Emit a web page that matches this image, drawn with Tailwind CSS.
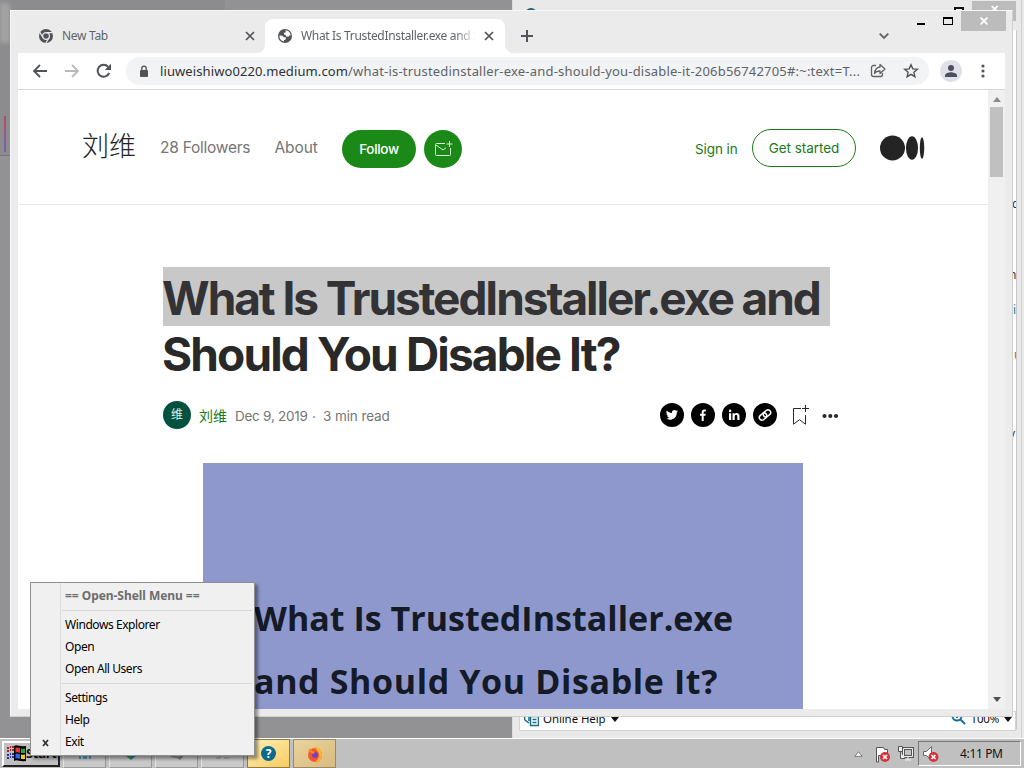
<!DOCTYPE html>
<html lang="en">
<head>
    <meta charset="UTF-8">
    <meta name="viewport" content="width=device-width, initial-scale=1.0">
    <title>What Is TrustedInstaller.exe and Should You Disable It?</title>
    <script src="https://cdn.jsdelivr.net/npm/@tailwindcss/browser@4"></script>
</head>
<body class="relative w-[1024px] h-[768px] overflow-hidden bg-[#929294] font-['Noto_Sans','Noto_Sans_CJK_SC',sans-serif] whitespace-nowrap">

    <!-- Blurred edge of the window at the far left -->
    <div class="absolute left-0 top-0 w-[225px] h-[155px] bg-[#8c8c8e]"></div>
    <div class="absolute left-0 top-[3px] w-[10px] h-[40px] bg-[#a2a2a3] blur-[2px]"></div>
    <div class="absolute left-1 top-[116px] w-[2px] h-[36px] bg-linear-to-b from-[#b8466a] to-[#6f62b5]"></div>
    <div class="absolute left-0 top-[155px] w-[10px] h-px bg-[#77777a]"></div>

    <!-- Background window -->
    <section class="absolute left-[512px] top-0 w-[512px] h-[738px] bg-[#e9e9e9] border-l border-[#dcdcdc]">
        <svg class="absolute left-[10px] top-[7px]" width="16" height="8"><circle cx="8" cy="7" r="6" fill="#1f5f7e"/><circle cx="8" cy="9" r="4" fill="#dfe8ec"/></svg>
        <div class="absolute left-[441px] top-[7px] w-[10px] h-[8px] border-2 border-[#111]"></div>
        <div class="absolute left-[459px] top-px w-[44px] h-[20px] bg-[#bcbcbc] text-white text-[11px] font-bold text-center">✕</div>
        <div class="absolute left-[499px] top-[30px] w-[5px] h-[700px] bg-white border-x border-[#c9c9c9] overflow-hidden text-[12px] leading-none text-[#333]">
            <span class="absolute -left-px top-[168px]">c</span>
            <span class="absolute -left-1 top-[239px]">n</span>
            <span class="absolute left-0 top-[274px] text-[#1c7a8c]">ic</span>
            <span class="absolute left-px top-[319px] text-[#55777c]">u</span>
            <span class="absolute -left-1 top-[398px]">v</span>
        </div>
        <div class="absolute left-[508px] top-0 w-px h-full bg-[#cfcfcf]"></div>
        <div class="absolute left-[6px] bottom-[7px] w-[497px] h-[20px] bg-white border border-[#d4d4d4] flex items-center text-[12px] leading-none text-[#111]">
            <svg class="ml-[3px] -mt-1 shrink-0" width="16" height="16" fill="none" stroke="#1b6e86" stroke-width="1.5"><path d="M7 2a5 5 0 0 0-5 7l4 3M6 4v6"/><path fill="#fff" d="M7.5 5.5h8v9h-8zM9.500 8.500h4M9.500 11.500h4"/></svg>
            <span class="ml-1 -mt-[5px] w-[64px] text-[11.500px] tracking-[-0.1px]">Online Help</span>
            <svg class="ml-1 -mt-1" width="8" height="5"><path d="M0 0h8L4 5z" fill="#111"/></svg>
            <svg class="ml-auto -mt-2" width="15" height="15" fill="none" stroke="#1b6e9b" stroke-width="2"><circle cx="6" cy="6" r="4.500"/><path d="m9 9 5 5M4 6h4M6 4v4"/></svg>
            <span class="ml-[5px] -mt-[5px] text-[11.500px] tracking-[-0.2px]">100%</span>
            <svg class="ml-[5px] mr-[3px] -mt-1" width="8" height="5"><path d="M0 0h8L4 5z" fill="#111"/></svg>
        </div>
    </section>

    <!-- Browser window -->
    <main class="absolute left-[10px] top-[10px] w-[1003px] h-[707px] bg-[#ebebeb] border border-[#f7f7f7] border-r-[#cfcfcf] border-b-[#d0d0d0] px-[7px] pb-[7px] flex flex-col">
        <!-- Tab strip -->
        <div class="relative h-[42px] shrink-0 flex items-end text-[12px] text-[#5f6368]">
            <div class="w-[247px] h-[34px] flex items-center pl-[20px] pr-[10px]">
                <svg width="16" height="16" viewBox="0 0 16 16"><circle cx="8" cy="8" r="7" fill="#505357"/><circle cx="8" cy="8" r="3.400" fill="#505357" stroke="#ebebeb" stroke-width="1.200"/><path d="M8 4.600h6.200M5 9.700 1.900 4.400M11 9.700 7.900 15" stroke="#ebebeb" stroke-width="1.200"/></svg>
                <span class="ml-2 tracking-[-0.3px]">New Tab</span>
                <svg class="ml-auto" width="10" height="10" stroke="#505357" stroke-width="1.700"><path d="m1 1 8 8M9 1 1 9"/></svg>
            </div>
            <div class="relative w-[240px] h-[34px] bg-white rounded-t-lg flex items-center pl-[12px] pr-[11px]">
                <svg class="absolute -left-2 bottom-0" width="8" height="8"><path d="M8 0v8H0a8 8 0 0 0 8-8" fill="#fff"/></svg>
                <svg class="absolute -right-2 bottom-0" width="8" height="8"><path d="M0 0v8h8a8 8 0 0 1-8-8" fill="#fff"/></svg>
                <svg class="shrink-0" width="16" height="16" viewBox="0 0 16 16"><circle cx="8" cy="8" r="7" fill="#505357"/><path d="M8.500 2.300c3 .2 5.200 2.700 5.200 5.400l-1.200-.5-1 1.600-2.300-.4-.8-1.700-1.500-.3.200-1.600 1.700-.6zM2.400 7.500l3 .2 1.700 1.500 2 .4-.5 1.800-1.500.6-.3 1.600C4 12.900 2.200 10.600 2.400 7.500" fill="#fff"/></svg>
                <span class="ml-2 w-[175px] overflow-hidden tracking-[-0.330px] mask-r-from-88%">What Is TrustedInstaller.exe and Should</span>
                <svg class="ml-auto" width="10" height="10" stroke="#505357" stroke-width="1.700"><path d="m1 1 8 8M9 1 1 9"/></svg>
            </div>
            <svg class="ml-[16px] mb-[11px]" width="12" height="12" stroke="#505357" stroke-width="2"><path d="M6 0v12M0 6h12"/></svg>
            <svg class="absolute left-[861px] top-[22px]" width="10" height="7" fill="none" stroke="#606367" stroke-width="1.800"><path d="m.7.700 4.300 4.300L9.300.7"/></svg>
            <div class="absolute left-[899px] top-[12px] w-[8px] h-[2px] bg-black"></div>
            <div class="absolute left-[925px] top-[6px] w-[10px] h-[8px] border border-t-2 border-black"></div>
            <div class="absolute left-[943px] top-0 w-[45px] h-[20px] bg-[#bcbcbc] flex items-center justify-center">
                <svg width="8" height="8" stroke="#fff" stroke-width="1.700"><path d="m.5.500 7 7M7.500.5l-7 7"/></svg>
            </div>
        </div>
        <!-- Toolbar -->
        <div class="h-[37px] shrink-0 bg-white border-b border-[#d8d8d8] flex items-center">
            <svg class="ml-[14px]" width="16" height="16" fill="none" stroke="#505357" stroke-width="1.800"><path d="M15 8H2M8 2 2 8l6 6"/></svg>
            <svg class="ml-[16px]" width="16" height="16" fill="none" stroke="#b9babc" stroke-width="1.800"><path d="M1 8h13M8 2l6 6-6 6"/></svg>
            <svg class="ml-[16px]" width="16" height="16"><path d="M13.200 10A6 6 0 1 1 12.200 3.800" fill="none" stroke="#505357" stroke-width="2"/><path d="M15 .8V7H8.800z" fill="#505357"/></svg>
            <div class="ml-[14px] w-[803px] h-[28px] rounded-full bg-[#f1f3f4] flex items-center pl-[13px]">
                <svg width="10" height="13"><rect x="1" y="5" width="8" height="7" rx="1" fill="#505357"/><path d="M2.800 5V3.300a2.200 2.200 0 0 1 4.400 0V5" fill="none" stroke="#505357" stroke-width="1.300"/></svg>
                <span class="ml-[11px] mt-px w-[700px] text-[13px] tracking-[0.2px] text-[#5f6368]"><span class="text-[#303134] tracking-[0.1px]">liuweishiwo0220.medium.com</span>/what-is-trustedinstaller-exe-and-should-you-disable-it-206b56742705#:~:text=T...</span>
                <svg class="ml-[10px] shrink-0" width="17" height="16" fill="none" stroke="#5f6368" stroke-width="1.300" stroke-linejoin="round"><path d="M6 2.500H3.500a2 2 0 0 0-2 2v7a2 2 0 0 0 2 2h7a2 2 0 0 0 2-2V10"/><path d="M10 1.500 15 6l-5 4.500V8c-2.500 0-4.300.8-5.500 2.500C4.800 7.500 6.500 4.500 10 4z"/></svg>
                <svg class="ml-[16px] shrink-0" width="16" height="16" fill="none" stroke="#505357" stroke-width="1.400"><path d="m8 1.800 1.800 4.100 4.500.4-3.400 3 1 4.400L8 11.400l-3.900 2.300 1-4.400-3.400-3 4.500-.4z"/></svg>
            </div>
            <svg class="ml-[11px]" width="22" height="22"><circle cx="11" cy="11" r="11" fill="#dfe1e8"/><circle cx="11" cy="8" r="3" fill="#4b5060"/><path d="M5 17v-1.500c0-2 4-3.200 6-3.200s6 1.200 6 3.200V17z" fill="#4b5060"/></svg>
            <svg class="ml-[19px]" width="4" height="14" fill="#505357"><circle cx="2" cy="2" r="1.600"/><circle cx="2" cy="7" r="1.600"/><circle cx="2" cy="12" r="1.600"/></svg>
        </div>
        <!-- Page and scrollbar -->
        <div class="flex-1 min-h-0 flex bg-white">
            <article class="w-[970px] overflow-hidden font-[Inter,'Noto_Sans_CJK_SC',sans-serif]">
                <header class="h-[115px] border-b border-[#e6e6e6] flex items-center pt-[2px] pl-[64px] text-[#757575]">
                    <span class="w-[78px] -mt-[6px] text-[27px] text-[#242424] font-light font-['Noto_Sans_CJK_SC',sans-serif]">刘维</span>
                    <span class="w-[114.500px] text-[15.500px] tracking-[-0.250px]">28 Followers</span>
                    <span class="w-[67.500px] text-[15.500px] tracking-[-0.1px]">About</span>
                    <span class="mt-[2px] w-[74px] h-[38px] rounded-full bg-[#1a8917] text-white text-[13.500px] font-medium tracking-[-0.3px] flex items-center justify-center">Follow</span>
                    <span class="mt-[2px] ml-2 size-[38px] rounded-full bg-[#1a8917] flex items-center justify-center">
                        <svg width="20" height="20" fill="none" stroke="#d9efd8"><path d="M12 4.500H3.500a1 1 0 0 0-1 1v10a1 1 0 0 0 1 1h13a1 1 0 0 0 1-1V9M3 6l7 5 3-2.200M16.500 2v6M13.500 5h6"/></svg>
                    </span>
                    <span class="mt-[2px] ml-[233px] w-[57px] text-[13.500px] text-[#1a7a17] tracking-[-0.1px]">Sign in</span>
                    <span class="w-[104px] h-[38px] rounded-full border border-[#1a7a17] text-[#1a7a17] text-[13.500px] tracking-[-0.05px] flex items-center justify-center">Get started</span>
                    <svg class="ml-6 -mt-px" width="45" height="26" fill="#242424"><ellipse cx="12.500" cy="13" rx="12.500" ry="12.500"/><ellipse cx="32" cy="13" rx="6" ry="11.800"/><ellipse cx="42" cy="13" rx="2.200" ry="10.800"/></svg>
                </header>
                <h1 class="mt-[62px] ml-[145px] text-[46px] leading-[56px] font-bold text-[#292929]">
                    <span class="block w-[667px] h-[59px] pt-[3px] bg-[#c8c8c8] text-[#333335] tracking-[-2.070px] -indent-px">What Is TrustedInstaller.exe and</span>
                    <span class="block tracking-[-1.850px] -indent-px">Should You Disable It?</span>
                </h1>
                <div class="mt-[19px] ml-[145px] h-[28px] flex items-center text-[14px] text-[#757575]">
                    <span class="size-[28px] rounded-full bg-[#04513f] text-[#dceee6] text-[12px] flex items-center justify-center">维</span>
                    <span class="ml-2 w-[36px] text-[#1a7a17] font-['Noto_Sans_CJK_SC',sans-serif]">刘维</span>
                    <span class="mt-[2px] w-[77px] text-[13.500px] tracking-[-0.250px]">Dec 9, 2019</span>
                    <span class="mt-[2px] w-[11px]">·</span>
                    <span class="mt-[2px] text-[13.500px] tracking-[-0.1px]">3 min read</span>
                    <div class="absolute left-[649px] flex items-center gap-[7px]">
                        <svg width="24" height="24"><circle cx="12" cy="12" r="12"/><path d="M18 8.100c-.4.200-.9.300-1.400.4.500-.3.900-.8 1.100-1.400-.5.300-1 .5-1.600.6A2.500 2.500 0 0 0 11.900 10C9.800 9.900 8 8.900 6.700 7.400c-.7 1.200-.3 2.600.8 3.300-.4 0-.8-.1-1.100-.3 0 1.200.8 2.200 2 2.500-.4.100-.8.100-1.100 0 .3 1 1.200 1.700 2.300 1.700-1 .8-2.300 1.200-3.600 1 3.900 2.500 10.800.7 10.800-6.200.5-.3.900-.8 1.200-1.300" fill="#fff"/></svg>
                        <svg width="24" height="24"><circle cx="12" cy="12" r="12"/><path d="M10.700 18v-5.200H9v-2.100h1.700V9.200c0-1.800 1-2.700 2.600-2.700l1.500.1v1.900h-1c-.9 0-1.100.4-1.100 1v1.200h2l-.3 2.100h-1.700V18z" fill="#fff"/></svg>
                        <svg width="24" height="24"><circle cx="12" cy="12" r="12"/><path d="M7 10.200h2.200V17H7zM10.500 10.200h2v1c1-1.700 5-1.700 5 1.700V17h-2.200v-3.600c0-2-2.600-1.800-2.600 0V17h-2.200z" fill="#fff"/><circle cx="8.100" cy="7.900" r="1.300" fill="#fff"/></svg>
                        <svg width="24" height="24"><circle cx="12" cy="12" r="12"/><g fill="none" stroke="#fff" stroke-width="1.500" transform="rotate(-40 12 12)"><rect x="5.500" y="9.300" width="8" height="5.400" rx="2.700"/><rect x="10.500" y="9.300" width="8" height="5.400" rx="2.700"/></g></svg>
                        <svg class="ml-[7px]" width="20" height="24" fill="none" stroke="#292929"><path d="M10 5.500H2.500v15.700l6-4.500 6 4.500V12M14.500 2v7M11 5.500h7"/></svg>
                        <svg class="ml-[4px] mt-px" width="17" height="6" fill="#292929"><circle cx="2.500" cy="3" r="2.100"/><circle cx="8.300" cy="3" r="2.100"/><circle cx="14" cy="3" r="2.100"/></svg>
                    </div>
                </div>
                <figure class="mt-[34px] ml-[185px] w-[600px] h-[300px] bg-[#8e98cc] pt-[124px] pl-[51px] font-['Open_Sans',sans-serif] font-bold text-[34px] leading-[63px] text-[#141a26]">
                    <span class="block tracking-[0.020px]">What Is TrustedInstaller.exe</span>
                    <span class="block tracking-[0.620px]">and Should You Disable It?</span>
                </figure>
            </article>
            <div class="w-[17px] bg-[#f0f0f0] flex flex-col items-center py-[7px]">
                <svg width="8" height="5"><path d="M0 5h8L4 0z" fill="#8a8a8a"/></svg>
                <div class="mt-[5px] w-[13px] h-[70px] bg-[#c0c0c0]"></div>
                <svg class="mt-auto" width="8" height="5"><path d="M0 0h8L4 5z" fill="#505050"/></svg>
            </div>
        </div>
    </main>

    <!-- Taskbar -->
    <footer class="absolute left-0 bottom-0 w-full h-[30px] bg-[#c0c0c0] border-t border-white flex items-center text-[12px] text-[#111]">
        <div class="ml-[2px] w-[58px] h-[26px] border-2 border-t-white border-l-white border-r-[#222] border-b-[#222] flex items-center pl-[3px] font-bold text-[13px]">
            <svg class="shrink-0" width="20" height="19"><path d="M7 2c3-2 5 1 12 0v15c-7 1-9-2-12 0z" fill="#000"/><path d="M8.500 4c2-1 3 0 4.500.3v4.500c-2-.5-3-1-4.500-.3z" fill="#e33"/><path d="M14 4.500c1.500.3 2.500.2 4 0V9c-1.500.2-2.500.2-4 0z" fill="#2a4"/><path d="M8.500 10c2-1 3 0 4.500.3v4.500c-2-.5-3-1-4.500-.3z" fill="#36e"/><path d="M14 10.500c1.500.3 2.500.2 4 0V15c-1.500.2-2.500.2-4 0z" fill="#ec2"/><path d="M0 4h2m1-1h1m1 0h2M0 7h2m1-1h1m1 0h2" stroke="#a22" stroke-width="2"/><path d="M0 11h2m1-1h1m1 0h2M0 14h2m1-1h1m1 0h2" stroke="#23a" stroke-width="2"/></svg>
            <span class="-ml-px tracking-[-0.3px]">Start</span>
        </div>
        <div class="ml-[3px] flex gap-[3px]">
            <div class="w-[43px] h-[29px] bg-[#c9c9c9] border border-[#e5e5e5] border-r-[#999] border-b-[#999] flex items-center justify-center"><svg width="16" height="16" fill="none" stroke="#4aa7c4" stroke-width="2"><path d="M3 13V6h4v7M9 13V6h4v7"/></svg></div>
            <div class="w-[43px] h-[29px] bg-[#c9c9c9] border border-[#e5e5e5] border-r-[#999] border-b-[#999] flex items-center justify-center"><svg width="16" height="16"><path d="M3 5h5v9l-5-4z" fill="#2e9b4a"/><path d="M8 5h5v5l-5 4z" fill="#3678c9"/></svg></div>
            <div class="w-[43px] h-[29px] bg-[#c9c9c9] border border-[#e5e5e5] border-r-[#999] border-b-[#999] flex items-center justify-center"><svg width="18" height="16"><path d="M2 6h13v5l-3 3-3-2-6-1z" fill="#888"/><path d="M5 8h7l-2 3z" fill="#ddd"/></svg></div>
            <div class="w-[43px] h-[29px] bg-[#c9c9c9] border border-[#e5e5e5] border-r-[#999] border-b-[#999] flex items-center justify-center"><svg width="18" height="16" fill="none" stroke="#999"><path d="M2 12h4V8h8M10 12h5"/></svg></div>
            <div class="w-[43px] h-[29px] border border-[#8d7a4d] bg-linear-to-br from-[#fff0b8] to-[#f5cc5e] flex items-center justify-center"><span class="size-[15px] rounded-full bg-[#0b6a8d] text-white font-bold text-[12px] leading-[15px] text-center">?</span></div>
            <div class="w-[43px] h-[29px] border border-[#97896c] bg-linear-to-br from-[#ead39c] to-[#d9bb80] flex items-center justify-center">
                <svg width="18" height="18"><circle cx="9" cy="10" r="7" fill="#f5542f"/><path d="M9 1c4 2 7 4 7 9 0 4-4 7-7 7 4-3 5-7 3-10-1-2-3-3-3-6" fill="#fdb52a"/><circle cx="9" cy="10" r="3" fill="#7a3fc0"/><path d="M2 6 4 3l2 3 3 1-2 2z" fill="#f88a20"/></svg>
            </div>
        </div>
        <div class="ml-auto flex items-center h-full">
            <svg width="9" height="6"><path d="M.8 5.300h7.400L4.500.8z" fill="#fff" stroke="#777"/></svg>
            <svg class="ml-[10px]" width="18" height="18"><path d="M3.500 2.500h7l1 2h3v6h-9V17h-2z" fill="#fff" stroke="#555"/><circle cx="12" cy="12" r="5" fill="#d9303a"/><path d="m10 10 4 4m0-4-4 4" stroke="#fff" stroke-width="1.700"/></svg>
            <svg class="ml-[6px]" width="18" height="18" fill="none" stroke="#555"><path d="M6.500 3.500h9v8h-9z" stroke="#555" stroke-width="3"/><path d="M6.500 3.500h9v8h-9zM8 15h6M11 12v3" stroke="#eee"/><path d="M1.500 1.500h4v5h-4zM3.500 7v6.500H8" fill="#eee"/></svg>
            <div class="ml-[3px] w-[103px] h-[25px] border border-t-[#777] border-l-[#777] border-r-white border-b-white flex items-center pl-[3px]">
                <svg width="18" height="18"><path d="M1.500 6.500h3l5-5v14l-5-5h-3z" fill="#fff" stroke="#666"/><circle cx="11.500" cy="12" r="5" fill="#d9303a"/><path d="m9.500 10 4 4m0-4-4 4" stroke="#fff" stroke-width="1.700"/></svg>
                <span class="ml-[20px] tracking-[-0.35px]">4:11 PM</span>
            </div>
            <div class="w-[3px]"></div>
        </div>
    </footer>

    <!-- Open-Shell context menu -->
    <nav class="absolute left-[30px] top-[582px] w-[225px] h-[174px] bg-[#f0f0f0] border border-[#8f8f8f] shadow-[3px_3px_3px_rgba(0,0,0,0.4)] text-[12px] text-black leading-[22px] pl-[29px]">
        <div class="h-full border-l border-[#dedede] pt-[2px] pl-[4px] tracking-[-0.430px]">
            <div class="font-bold text-[#6d6d6d] tracking-[-0.050px]">== Open-Shell Menu ==</div>
            <div class="-ml-[3px] mr-[2px] mt-[3px] mb-[3px] border-t border-[#d7d7d7]"></div>
            <div>Windows Explorer</div>
            <div>Open</div>
            <div>Open All Users</div>
            <div class="-ml-[3px] mr-[2px] my-[3px] border-t border-[#d7d7d7]"></div>
            <div>Settings</div>
            <div>Help</div>
            <div>Exit</div>
        </div>
        <svg class="absolute left-[11px] bottom-[8px]" width="8" height="8" stroke="#333" stroke-width="1.800"><path d="m1 1 5 6M6 1 1 7"/></svg>
    </nav>
</body>
</html>
